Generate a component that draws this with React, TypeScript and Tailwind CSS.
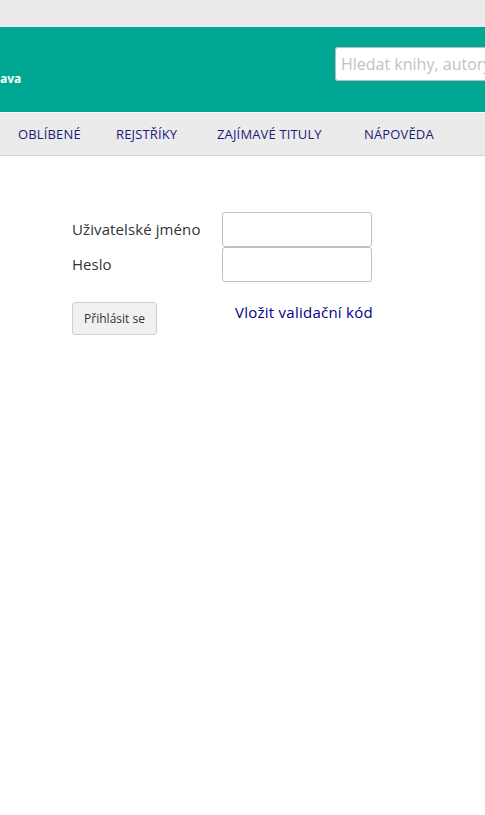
export default function App() {
  const nav = [
    { label: "OBLÍBENÉ", w: "w-[98px]" },
    { label: "REJSTŘÍKY", w: "w-[101px]" },
    { label: "ZAJÍMAVÉ TITULY", w: "w-[147px]" },
    { label: "NÁPOVĚDA", w: "w-[90px]" },
  ];
  return (
    <div className="min-h-[815px] w-[485px] overflow-hidden bg-white font-['Open_Sans',sans-serif]">
      {/* top strip */}
      <div className="h-[27px] bg-[#ebebeb]" />

      {/* header */}
      <div className="relative flex h-[85px] items-start bg-[#00a894]">
        <div className="mt-[44px] text-[12px] font-bold leading-[16px] text-white">ava</div>
        <div className="ml-auto mt-[20px] flex h-[34px] w-[150px] items-center overflow-hidden rounded-l-[3px] border border-r-0 border-[#bdbdbd] bg-white pl-[5px]">
          <span className="whitespace-nowrap text-[16px] text-[#c2c2c2]">Hledat knihy, autory</span>
        </div>
      </div>

      {/* nav */}
      <div className="mt-px flex h-[43px] items-center border-b border-[#d6d6d6] bg-[#ebebeb] pl-[18px]">
        {nav.map((n) => (
          <span key={n.label} className={`${n.w} shrink-0 text-[13px] leading-none tracking-[0.15px] text-[#1a1a7a]`}>
            {n.label}
          </span>
        ))}
      </div>

      {/* login form */}
      <div className="pl-[72px] pt-[56px]">
        <div className="flex items-center">
          <label className="w-[150px] text-[15px] tracking-[0.1px] text-[#333]">Uživatelské jméno</label>
          <input className="h-[35px] w-[150px] rounded-[3px] border border-[#c0c0c0] bg-white" />
        </div>
        <div className="flex items-center">
          <label className="w-[150px] text-[15px] text-[#333]">Heslo</label>
          <input type="password" className="h-[35px] w-[150px] rounded-[3px] border border-[#c0c0c0] bg-white" />
        </div>
        <div className="mt-[20px] flex items-start">
          <button className="h-[33px] w-[85px] rounded-[3px] border border-[#d0d0d0] bg-[#f0f0f0] text-[12px] text-[#333]">
            Přihlásit se
          </button>
          <a className="ml-[78px] -mt-[1px] text-[15px] tracking-[0.25px] text-[#000088]">Vložit validační kód</a>
        </div>
      </div>
    </div>
  );
}
